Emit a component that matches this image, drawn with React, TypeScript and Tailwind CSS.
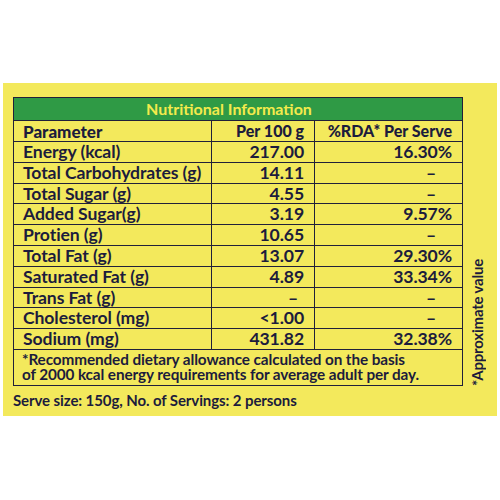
import React from 'react';

interface Row {
  name: string;
  per100: string;
  rda: string;
}

const rows: Row[] = [
  { name: 'Energy (kcal)', per100: '217.00', rda: '16.30%' },
  { name: 'Total Carbohydrates (g)', per100: '14.11', rda: '–' },
  { name: 'Total Sugar (g)', per100: '4.55', rda: '–' },
  { name: 'Added Sugar(g)', per100: '3.19', rda: '9.57%' },
  { name: 'Protien (g)', per100: '10.65', rda: '–' },
  { name: 'Total Fat (g)', per100: '13.07', rda: '29.30%' },
  { name: 'Saturated Fat (g)', per100: '4.89', rda: '33.34%' },
  { name: 'Trans Fat (g)', per100: '–', rda: '–' },
  { name: 'Cholesterol (mg)', per100: '<1.00', rda: '–' },
  { name: 'Sodium (mg)', per100: '431.82', rda: '32.38%' },
];

const App: React.FC = () => {
  return (
    <div
      className="w-[500px] h-[500px] bg-white pt-[83px] px-[3px] text-[#1c1c3c]"
      style={{ fontFamily: 'Lato, "Open Sans", sans-serif' }}
    >
      <div className="h-[333px] bg-[#f3e95c] pt-[14px] pl-[10px] flex">
        <div className="w-[450px]">
          <div className="border-[1.5px] border-[#20203a]">
            {/* Title bar */}
            <div className="h-[22px] bg-[#2f9a45] flex items-center justify-center pr-[18px] text-[16px] font-bold text-[#f4ea4c] leading-none">
              Nutritional Information
            </div>

            {/* Header */}
            <div className="grid grid-cols-[197px_103px_1fr] h-[21px] border-t-[1.5px] border-[#20203a] text-[16px] font-black leading-none">
              <div className="flex items-center pl-[9px] text-[17px]">Parameter</div>
              <div className="flex items-center justify-end pr-[10px] border-l-[1.5px] border-[#20203a]">Per 100 g</div>
              <div className="flex items-center justify-end pr-[10px] border-l-[1.5px] border-[#20203a]">%RDA* Per Serve</div>
            </div>

            {rows.map((row) => (
              <div
                key={row.name}
                className="grid grid-cols-[197px_103px_1fr] h-[20.8px] border-t-[1.5px] border-[#20203a] text-[17.6px] font-bold leading-none tracking-[-0.1px]"
              >
                <div className="flex items-center pl-[9px] whitespace-nowrap">{row.name}</div>
                <div
                  className={
                    row.per100 === '–'
                      ? 'flex items-center justify-end pr-[16px] border-l-[1.5px] border-[#20203a]'
                      : 'flex items-center justify-end pr-[10px] border-l-[1.5px] border-[#20203a]'
                  }
                >
                  {row.per100}
                </div>
                <div
                  className={
                    row.rda === '–'
                      ? 'flex items-center justify-end pr-[26px] border-l-[1.5px] border-[#20203a]'
                      : 'flex items-center justify-end pr-[10px] border-l-[1.5px] border-[#20203a]'
                  }
                >
                  {row.rda}
                </div>
              </div>
            ))}

            {/* Footnote */}
            <div className="border-t-[1.5px] border-[#20203a] h-[36px] pl-[8px] flex items-center text-[15.3px] font-bold leading-[15px] tracking-[-0.1px] whitespace-nowrap">
              <p>
                *Recommended dietary allowance calculated on the basis
                <br />
                of 2000 kcal energy requirements for average adult per day.
              </p>
            </div>
          </div>

          <div className="mt-[7px] text-[15px] font-bold leading-none tracking-[-0.1px]">
            Serve size: 150g, No. of Servings: 2 persons
          </div>
        </div>

        <div className="flex-1 flex items-end justify-center pb-[30px]">
          <div className="[writing-mode:vertical-rl] rotate-180 text-[15px] font-bold leading-none tracking-[-0.2px] mr-[5px]">
            *Approximate value
          </div>
        </div>
      </div>
    </div>
  );
};

export default App;
